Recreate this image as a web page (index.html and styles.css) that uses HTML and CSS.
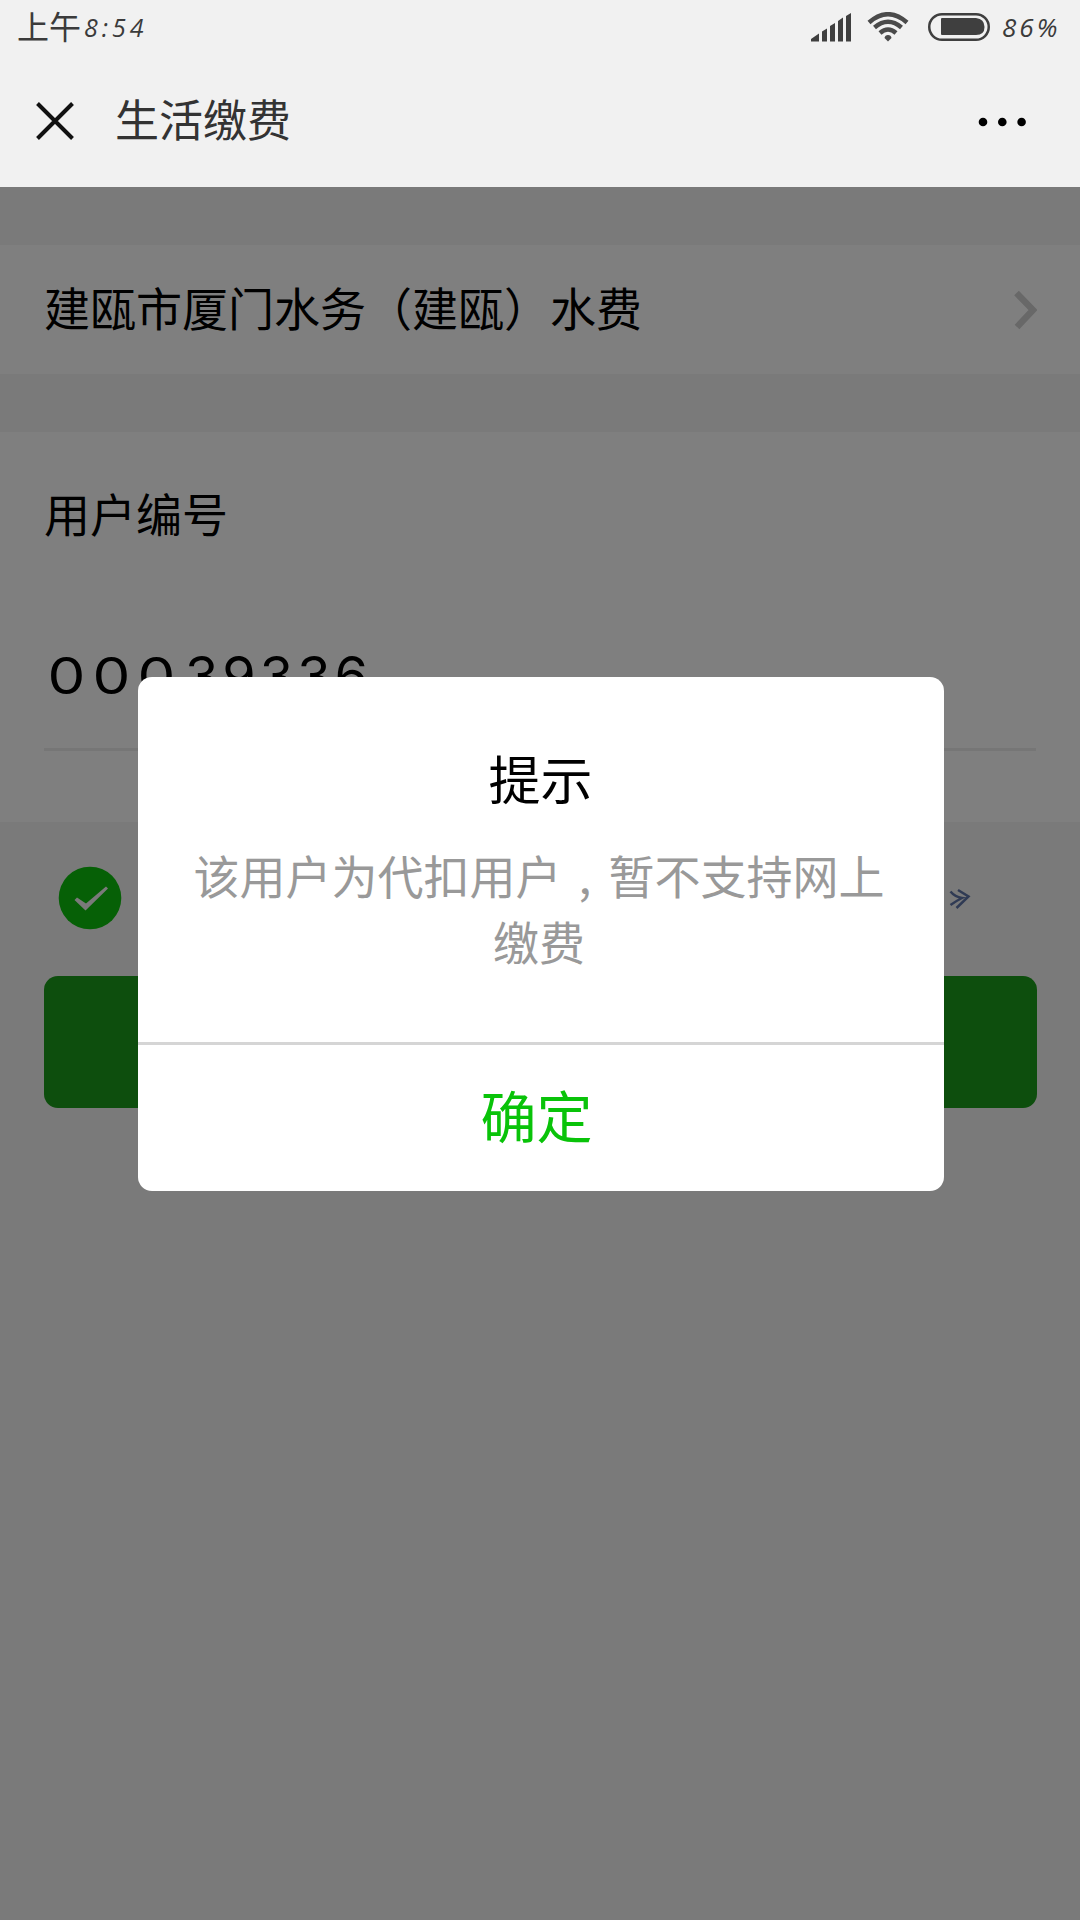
FILE: index.html
```html
<!DOCTYPE html>
<html lang="zh-CN">
<head>
<meta charset="utf-8">
<title>生活缴费</title>
<link rel="stylesheet" href="styles.css">
</head>
<body>
<header class="top">
  <div class="status">
    <div class="time">上午<span class="clock">8:54</span></div>
    <svg class="signal" width="40" height="29" viewBox="0 0 40 29"><path d="M0 28.500V26L8 20.500V28.500ZM11 28.500V18.500L16 15.500V28.500ZM19 28.500V13L24 10V28.500ZM27 28.500V8L32 4.500V28.500ZM35 28.500V3L40 0V28.500Z"/></svg>
    <svg class="wifi" width="42" height="30" viewBox="0 0 42 30"><g><path d="M2 10.500Q21-6 40 10.500"/><path d="M7.500 15.500Q21 4 34.500 15.500"/><path d="M13 21Q21 14 29 21"/></g><path class="solid" d="M21 23Q24 23 24.500 26L21 29.500L17.500 26Q18 23 21 23Z"/></svg>
    <svg class="battery" width="62" height="28" viewBox="0 0 62 28"><rect x="1.250" y="1.250" width="59.500" height="25.500" rx="12.750"/><path d="M14 5H48Q56.500 6 56.500 14T48 22H14Q13 22 13 21V6Q13 5 14 5Z"/></svg>
    <div class="percent">86%</div>
  </div>
  <div class="nav">
    <svg class="close" width="38" height="38" viewBox="0 0 38 38"><path d="M1.500 1.500L36.500 36.500M36.500 1.500L1.500 36.500"/></svg>
    <h1 class="page-title">生活缴费</h1>
    <svg class="more" width="48" height="10" viewBox="0 0 48 10"><circle cx="5" cy="5" r="4.300"/><circle cx="24.300" cy="5" r="4.300"/><circle cx="43.600" cy="5" r="4.300"/></svg>
  </div>
</header>
<main class="page">
  <section class="company">
    <div class="company-name">建瓯市厦门水务<span class="paren" lang="zh-TW">（</span>建瓯<span class="paren" lang="zh-TW">）</span>水费</div>
    <svg width="23" height="40" viewBox="0 0 23 40"><path d="M2.500 3L19 20L3 37"/></svg>
  </section>
  <section class="account">
    <div class="label">用户编号</div>
    <div class="number"><span class="zero">0</span><span class="zero">0</span><span class="zero">0</span><span class="digits">39336</span></div>
  </section>
  <div class="agree">
    <svg width="64" height="64" viewBox="0 0 64 64"><circle cx="32" cy="32" r="31.300"/><path d="M16.500 34L19 31.500L28 37.500L48 20.500L50 22.500L27.500 44.500Z"/></svg>
    <svg class="link" width="22" height="22" viewBox="0 0 22 22"><path d="M1.500 3.500Q6 9 13 10Q7 13 1.500 17M9 2L19.500 8.500L7.500 20"/></svg>
  </div>
  <button class="submit" aria-label="下一步"></button>
  <div class="mask"></div>
  <div class="dialog">
    <div class="dialog-body">
      <h2>提示</h2>
      <p>该用户为代扣用户<span class="comma">,</span>暂不支持网上<br>缴费</p>
    </div>
    <div class="confirm">确定</div>
  </div>
</main>
</body>
</html>
```
FILE: styles.css
```css
* { box-sizing: border-box; }
body {
  margin: 0;
  width: 1080px;
  height: 1920px;
  display: flex;
  flex-direction: column;
  overflow: hidden;
  font-family: "Noto Sans CJK SC", sans-serif;
  font-weight: 400;
  color: #000;
}
h1, h2, p { margin: 0; font-weight: 400; }
svg { display: block; flex: none; }
.top { height: 187px; background: #f1f1f1; flex: none; }
.status {
  height: 54px;
  padding: 0 17px;
  display: flex;
  align-items: center;
  color: #3b3b3b;
}
.time { flex: 1; display: flex; align-items: center; font-size: 32px; line-height: 50px; padding-bottom: 4px; }
.clock { margin-left: 3px; font-family: "Open Sans", sans-serif; font-style: italic; font-size: 25px; letter-spacing: 4px; padding-top: 4px; }
.signal { fill: #3f3f3f; }
.wifi { margin-left: 16px; }
.wifi g { fill: none; stroke: #4a4a4a; stroke-width: 4.5; }
.wifi .solid { fill: #4a4a4a; }
.battery { margin-left: 19px; fill: #3f3f3f; }
.battery rect { fill: none; stroke: #3f3f3f; stroke-width: 2.5; }
.percent { width: 61px; margin-left: 12px; font: italic 400 26px/54px "Open Sans", sans-serif; letter-spacing: 3px; white-space: nowrap; }
.nav { height: 133px; padding: 0 54px 0 36px; display: flex; align-items: center; }
.close { fill: none; stroke: #111; stroke-width: 4; }
.more { margin-top: 2px; }
.page-title { flex: 1; margin-left: 41px; padding-bottom: 5px; font-size: 44px; line-height: 64px; color: #333; }
.page { position: relative; flex: 1; background: #f4f4f4; padding-top: 58px; }
.company {
  height: 129px;
  padding: 0 43px 0 44px;
  display: flex;
  align-items: center;
  justify-content: space-between;
  background: #fff;
  font-size: 46px;
}
.company-name { padding-bottom: 8px; line-height: 68px; }
.paren { font-family: "Noto Sans CJK TC", sans-serif; }
.company svg { fill: none; stroke: #d0d0d0; stroke-width: 6.5; }
.account { height: 390px; margin-top: 58px; padding: 45px 44px 71px; background: #fff; }
.label { height: 70px; font-size: 46px; line-height: 70px; }
.number {
  height: 204px;
  padding-top: 99px;
  display: flex;
  align-items: flex-start;
  border-bottom: 3px solid #ececec;
  font: 400 54px/60px Inter, sans-serif;
}
.zero { width: 45px; text-align: center; font-size: 50px; transform: scaleX(1.2); }
.digits { margin-left: 6px; letter-spacing: 4px; }
.agree { height: 154px; padding: 44px 109px 0 58px; display: flex; justify-content: space-between; }
.agree circle { fill: #0cc00c; }
.agree path { fill: #f4f4f4; }
.agree .link { margin-top: 22px; }
.agree .link path { fill: none; stroke: #5f75a8; stroke-width: 2.5; }
.submit { display: block; width: 993px; height: 132px; margin-left: 44px; border: 0; border-radius: 14px; background: #1a9c1a; }
.mask { position: absolute; inset: 0; background: rgba(0, 0, 0, .5); }
.dialog {
  position: absolute;
  left: 137.5px;
  top: 489.5px;
  width: 806px;
  height: 514px;
  border-radius: 14px;
  background: #fff;
  text-align: center;
}
.dialog-body { height: 368px; padding-top: 64px; border-bottom: 3px solid #d5d5d5; }
.dialog h2 { font-size: 52px; line-height: 74px; }
.dialog p { width: 700px; margin: 26px auto 0; padding-right: 3px; font-size: 46px; line-height: 66px; color: #999; }
.comma { padding: 0 17px; }
.confirm { height: 145px; padding-right: 8px; font-size: 56px; line-height: 137px; color: #09c309; }
```
